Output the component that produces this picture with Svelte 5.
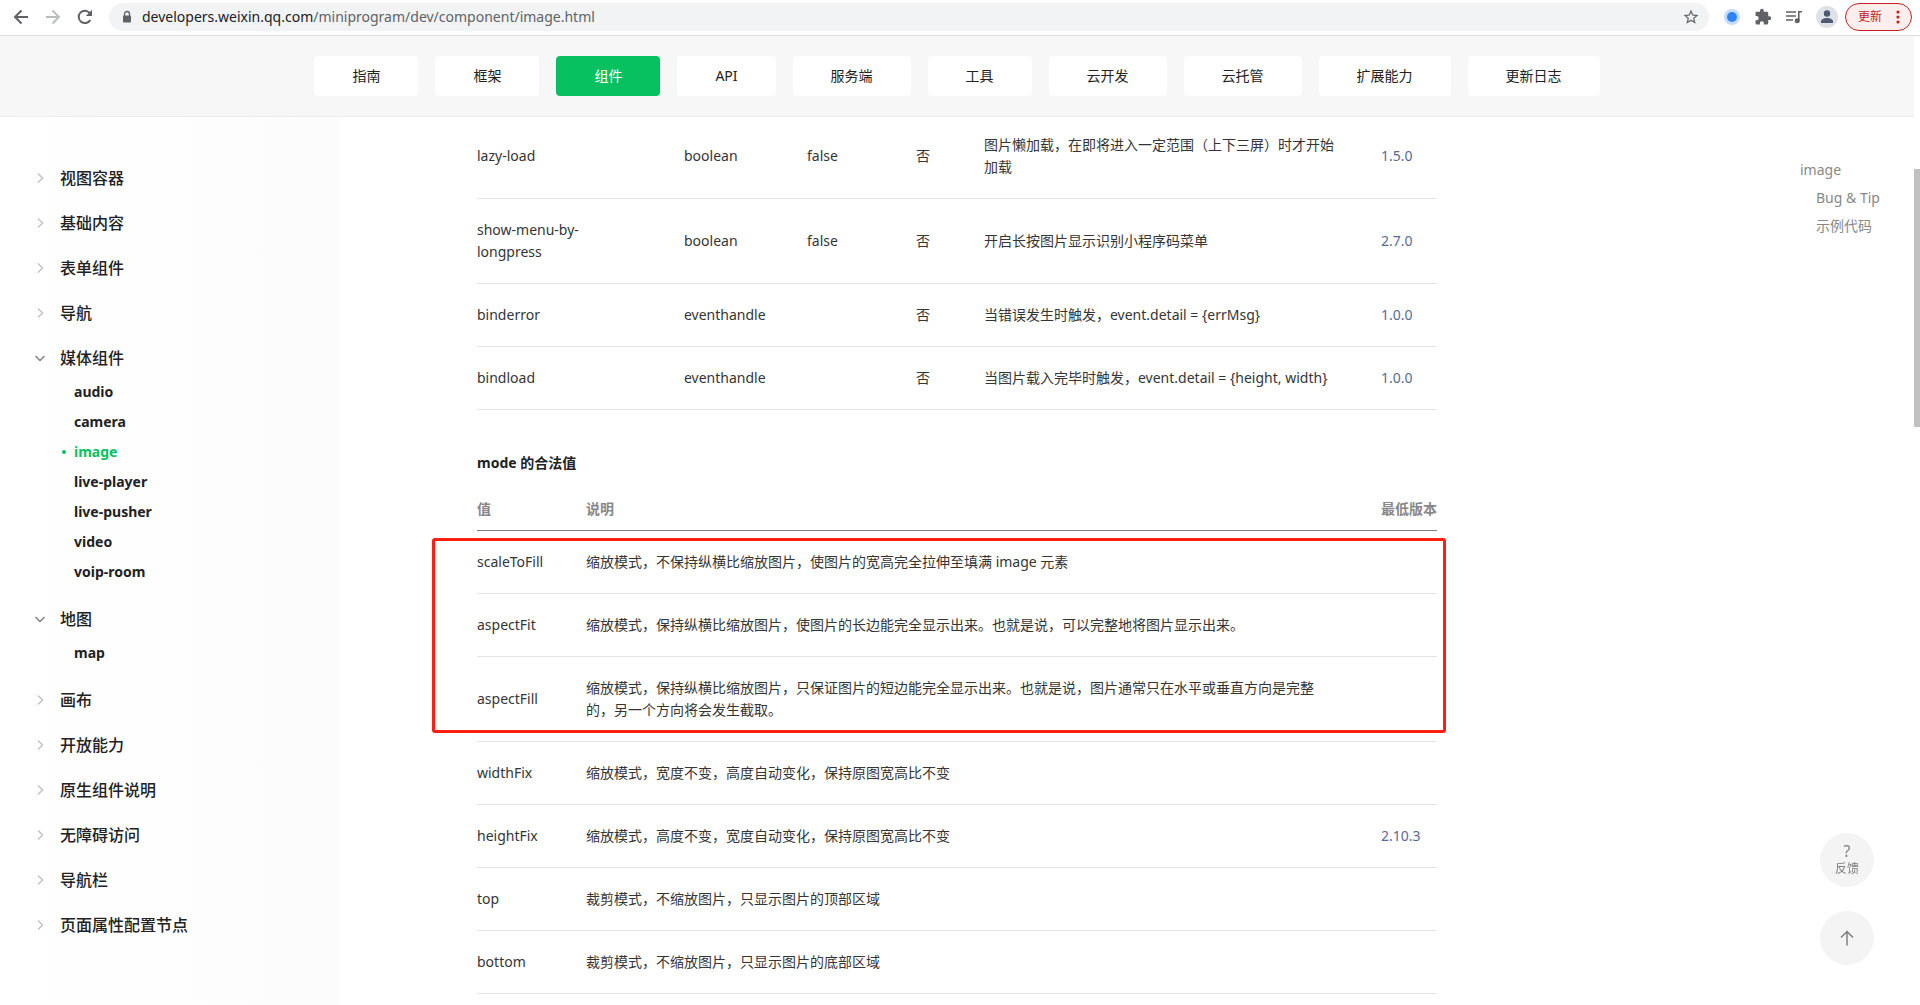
<script>
  const tabs = ['指南', '框架', '组件', 'API', '服务端', '工具', '云开发', '云托管', '扩展能力', '更新日志']
  let activeTab = '组件'

  let groups = [
    { title: '视图容器' },
    { title: '基础内容' },
    { title: '表单组件' },
    { title: '导航' },
    {
      title: '媒体组件',
      open: true,
      items: ['audio', 'camera', 'image', 'live-player', 'live-pusher', 'video', 'voip-room']
    },
    { title: '地图', open: true, items: ['map'] },
    { title: '画布' },
    { title: '开放能力' },
    { title: '原生组件说明' },
    { title: '无障碍访问' },
    { title: '导航栏' },
    { title: '页面属性配置节点' }
  ]
  let current = 'image'

  const props = [
    { name: 'lazy-load', type: 'boolean', def: 'false', desc: '图片懒加载，在即将进入一定范围（上下三屏）时才开始加载', version: '1.5.0' },
    { name: 'show-menu-by-longpress', type: 'boolean', def: 'false', desc: '开启长按图片显示识别小程序码菜单', version: '2.7.0' },
    { name: 'binderror', type: 'eventhandle', def: '', desc: '当错误发生时触发，event.detail = {errMsg}', version: '1.0.0' },
    { name: 'bindload', type: 'eventhandle', def: '', desc: '当图片载入完毕时触发，event.detail = {height, width}', version: '1.0.0' }
  ]

  const modes = [
    { name: 'scaleToFill', desc: '缩放模式，不保持纵横比缩放图片，使图片的宽高完全拉伸至填满 image 元素' },
    { name: 'aspectFit', desc: '缩放模式，保持纵横比缩放图片，使图片的长边能完全显示出来。也就是说，可以完整地将图片显示出来。' },
    { name: 'aspectFill', desc: '缩放模式，保持纵横比缩放图片，只保证图片的短边能完全显示出来。也就是说，图片通常只在水平或垂直方向是完整的，另一个方向将会发生截取。' },
    { name: 'widthFix', desc: '缩放模式，宽度不变，高度自动变化，保持原图宽高比不变' },
    { name: 'heightFix', desc: '缩放模式，高度不变，宽度自动变化，保持原图宽高比不变', version: '2.10.3' },
    { name: 'top', desc: '裁剪模式，不缩放图片，只显示图片的顶部区域' },
    { name: 'bottom', desc: '裁剪模式，不缩放图片，只显示图片的底部区域' }
  ]

  function toggle(group) {
    group.open = !group.open
    groups = groups
  }
</script>

<div class="window">
  <div class="toolbar">
    <button class="tool" aria-label="后退">
      <svg viewBox="0 0 16 16" width="16" height="16" fill="none" stroke="#5f6368" stroke-width="2">
        <path d="M15 8H2.5M8.5 1.5L2 8l6.500 6.500"/>
      </svg>
    </button>
    <button class="tool" aria-label="前进">
      <svg viewBox="0 0 16 16" width="16" height="16" fill="none" stroke="#babcbe" stroke-width="2">
        <path d="M1 8h12.500M7.500 1.500L14 8l-6.500 6.500"/>
      </svg>
    </button>
    <button class="tool" aria-label="重新加载">
      <svg viewBox="0 0 16 16" width="16" height="16">
        <path d="M13.300 11A6.200 6.200 0 1 1 12.600 3.800L14 5.200" fill="none" stroke="#5f6368" stroke-width="2"/>
        <path d="M15 .8v6.200H8.800z" fill="#5f6368"/>
      </svg>
    </button>
    <div class="address">
      <svg viewBox="0 0 10 14" width="10" height="14">
        <path d="M2.500 6V4a2.500 2.500 0 0 1 5 0v2" fill="none" stroke="#5f6368" stroke-width="1.300"/>
        <rect x="1" y="5.500" width="8" height="7" rx="1" fill="#5f6368"/>
      </svg>
      <span class="url">developers.weixin.qq.com<span class="path">/miniprogram/dev/component/image.html</span></span>
      <svg viewBox="0 0 24 24" width="18" height="18" fill="#5f6368">
        <path d="M22 9.240l-7.190-.62L12 2 9.190 8.630 2 9.240l5.460 4.730L5.820 21 12 17.270 18.180 21l-1.630-7.030L22 9.240zM12 15.400l-3.760 2.270 1-4.280-3.320-2.880 4.380-.38L12 6.100l1.710 4.040 4.380.38-3.320 2.880 1 4.280L12 15.400z"/>
      </svg>
    </div>
    <div class="extensions">
      <svg viewBox="0 0 18 18" width="18" height="18">
        <circle cx="9" cy="9" r="8" fill="#c3dbfc"/>
        <circle cx="9" cy="9" r="5" fill="#2c84f5"/>
      </svg>
      <svg viewBox="0 0 24 24" width="18" height="18" fill="#5f6368">
        <path d="M20.500 11H19V7c0-1.100-.9-2-2-2h-4V3.500a2.500 2.500 0 0 0-5 0V5H4c-1.100 0-2 .9-2 2v3.800h1.500a2.700 2.700 0 0 1 0 5.400H2V20c0 1.100.9 2 2 2h3.800v-1.500a2.700 2.700 0 0 1 5.400 0V22H17c1.100 0 2-.9 2-2v-4h1.500a2.500 2.500 0 0 0 0-5z"/>
      </svg>
      <svg viewBox="0 0 18 18" width="18" height="18">
        <path d="M1 4h10M1 8h10M1 12h7" stroke="#5f6368" stroke-width="1.600"/>
        <path d="M17 3.800h-3.200V13" fill="none" stroke="#5f6368" stroke-width="1.600"/>
        <circle cx="12.200" cy="12.800" r="2.500" fill="#5f6368"/>
      </svg>
      <svg viewBox="0 0 22 22" width="22" height="22">
        <circle cx="11" cy="11" r="11" fill="#dee1e6"/>
        <circle cx="11" cy="7.500" r="3.200" fill="#4f5b70"/>
        <path d="M5 17v-1.500c0-2 3-3.500 6-3.500s6 1.500 6 3.500V17z" fill="#4f5b70"/>
      </svg>
    </div>
    <button class="update">
      更新
      <svg viewBox="0 0 4 14" width="4" height="14" fill="#c5221f">
        <circle cx="2" cy="2" r="1.600"/>
        <circle cx="2" cy="7" r="1.600"/>
        <circle cx="2" cy="12" r="1.600"/>
      </svg>
    </button>
  </div>

  <div class="viewport">
    <div class="page">
      <nav class="tabs">
        {#each tabs as tab}
          <a href="#{tab}" class="tab" class:active={tab === activeTab} on:click|preventDefault={() => (activeTab = tab)}>{tab}</a>
        {/each}
      </nav>

      <div class="columns">
        <aside class="sidebar">
          {#each groups as group}
            <div class="group">
              <button class="group-title" aria-expanded={!!group.open} on:click={() => toggle(group)}>
                <svg class="arrow" class:open={group.open} viewBox="0 0 12 12" width="12" height="12" fill="none" stroke="currentColor" stroke-width="1.500">
                  <path d="M4 1.500L8.500 6 4 10.500"/>
                </svg>
                {group.title}
              </button>
              {#if group.open && group.items}
                <ul>
                  {#each group.items as item}
                    <li>
                      <a href="#{item}" class:current={item === current} on:click|preventDefault={() => (current = item)}>{item}</a>
                    </li>
                  {/each}
                </ul>
              {/if}
            </div>
          {/each}
        </aside>

        <main>
          <table>
            <colgroup>
              <col class="c-prop" />
              <col class="c-type" />
              <col class="c-default" />
              <col class="c-required" />
              <col />
              <col class="c-version" />
            </colgroup>
            <tbody>
              {#each props as row}
                <tr>
                  <td class="prop">{row.name}</td>
                  <td>{row.type}</td>
                  <td>{row.def}</td>
                  <td>否</td>
                  <td>{row.desc}</td>
                  <td><a href="#v{row.version}">{row.version}</a></td>
                </tr>
              {/each}
            </tbody>
          </table>

          <h4>mode 的合法值</h4>

          <div class="modes">
            <table>
              <colgroup>
                <col class="c-mode" />
                <col />
                <col class="c-version" />
              </colgroup>
              <thead>
                <tr>
                  <th>值</th>
                  <th>说明</th>
                  <th>最低版本</th>
                </tr>
              </thead>
              <tbody>
                {#each modes as mode}
                  <tr>
                    <td>{mode.name}</td>
                    <td>{mode.desc}</td>
                    <td>{#if mode.version}<a href="#v{mode.version}">{mode.version}</a>{/if}</td>
                  </tr>
                {/each}
              </tbody>
            </table>
            <div class="highlight"></div>
          </div>
        </main>

        <nav class="toc">
          <a href="#image">image</a>
          <a class="sub" href="#bug-tip">Bug &amp; Tip</a>
          <a class="sub" href="#demo">示例代码</a>
        </nav>
      </div>
    </div>

    <div class="scrollbar"><div class="thumb"></div></div>
  </div>

  <div class="floating">
    <button class="round">
      <span class="mark">?</span>
      反馈
    </button>
    <button class="round" aria-label="回到顶部">
      <svg viewBox="0 0 16 16" width="16" height="16" fill="none" stroke="#808080" stroke-width="1.500">
        <path d="M8 15.500V1.500M2 7.500l6-6 6 6"/>
      </svg>
    </button>
  </div>
</div>

<style>
  :global(body) {
    margin: 0;
    background: #fff;
    font-family: "Noto Sans", "Noto Sans CJK SC", sans-serif;
    font-size: 14px;
    line-height: 22px;
    color: #353535;
  }

  button {
    margin: 0;
    padding: 0;
    border: 0;
    background: none;
    font: inherit;
    color: inherit;
    cursor: pointer;
  }
  a { color: inherit; text-decoration: none; }
  svg { display: block; flex-shrink: 0; }

  .window {
    display: flex;
    flex-direction: column;
    height: 100vh;
    overflow: hidden;
  }

  .toolbar {
    display: flex;
    align-items: center;
    flex-shrink: 0;
    box-sizing: border-box;
    height: 36px;
    padding: 0 8px 1px 13px;
    border-bottom: 1px solid #dadce0;
    background: #fff;
  }
  .tool { margin-right: 16px; }
  .address {
    flex: 1;
    display: flex;
    align-items: center;
    gap: 10px;
    height: 28px;
    margin-right: 14px;
    padding: 0 9px 0 13px;
    border-radius: 14px;
    background: #f1f3f4;
    box-sizing: border-box;
  }
  .url { flex: 1; color: #202124; }
  .path { color: #5f6368; }
  .extensions {
    display: flex;
    align-items: center;
    gap: 13px;
    margin-right: 7px;
  }
  .update {
    display: flex;
    align-items: center;
    gap: 14px;
    box-sizing: border-box;
    height: 28px;
    padding: 0 11px 0 12px;
    border: 1px solid #c5221f;
    border-radius: 14px;
    background: #fceeed;
    color: #c5221f;
    font-size: 12px;
  }

  .viewport {
    flex: 1;
    display: flex;
    min-height: 0;
  }
  .page {
    flex: 1;
    display: flex;
    flex-direction: column;
    min-width: 0;
  }

  .tabs {
    display: flex;
    justify-content: center;
    gap: 17px;
    padding: 20px 0;
    border-bottom: 1px solid #ebebeb;
    background: #f7f7f7;
  }
  .tab {
    padding: 9px 38px;
    border-radius: 4px;
    background: #fff;
    color: #222;
  }
  .tab.active { background: #07c160; color: #fff; }

  .columns {
    flex: 1;
    display: grid;
    grid-template-columns: 340px 1fr 340px;
    min-height: 0;
    overflow: hidden;
  }

  .sidebar {
    padding: 40px 0 0 34px;
    background: linear-gradient(90deg, #fff, #fcfcfc);
    color: #222;
  }
  .group { padding: 9px 0 12px; }
  .group-title {
    display: flex;
    align-items: center;
    gap: 14px;
    font-size: 16px;
    font-weight: 500;
    line-height: 24px;
  }
  .arrow { color: #c4c4c4; }
  .arrow.open { color: #808080; transform: rotate(90deg); }
  .group ul {
    margin: 7px 0 0;
    padding: 0 0 0 26px;
    list-style: none;
  }
  .group ul:last-child { margin-bottom: -1px; }
  .group li { line-height: 30px; font-weight: 700; }
  .group li a {
    display: flex;
    align-items: center;
  }
  .group li a::before {
    content: '';
    width: 4px;
    height: 4px;
    margin: 0 8px 0 2px;
    border-radius: 50%;
  }
  .group li a.current { color: #07c160; }
  .group li a.current::before { background: #07c160; }

  main {
    width: 100%;
    max-width: 960px;
    margin: -3px auto 0;
  }
  table {
    width: 100%;
    table-layout: fixed;
    border-collapse: separate;
    border-spacing: 0;
  }
  .c-prop { width: 207px; }
  .c-type { width: 123px; }
  .c-default { width: 109px; }
  .c-required { width: 68px; }
  .c-version { width: 56px; }
  .c-mode { width: 109px; }
  td {
    padding: 20px 40px 20px 0;
    border-bottom: 1px solid #e4e4e4;
    vertical-align: middle;
  }
  td.prop { padding-right: 60px; }
  td:last-child { padding-right: 0; }
  td a { color: #576b95; }
  th {
    padding: 10px 0;
    border-bottom: 1px solid #808080;
    color: #888;
    font-weight: 600;
    text-align: left;
    white-space: nowrap;
  }
  h4 {
    margin: 42px 0 14px;
    color: #222;
    font-size: 14px;
    font-weight: 700;
  }
  .modes { position: relative; }
  .highlight {
    position: absolute;
    top: 50px;
    left: -45px;
    right: -9px;
    height: 189px;
    border: 3px solid #ff1e10;
    border-radius: 3px;
    pointer-events: none;
  }

  .toc {
    justify-self: end;
    width: 114px;
    padding-top: 39px;
    line-height: 28px;
    color: #888;
  }
  .toc a { display: block; }
  .toc .sub { padding-left: 16px; }

  .scrollbar { width: 6px; background: #fff; }
  .thumb {
    height: 258px;
    margin-top: 133px;
    background: #c1c1c1;
  }

  .floating {
    position: fixed;
    right: 46px;
    bottom: 40px;
    display: flex;
    flex-direction: column;
    gap: 24px;
  }
  .round {
    display: flex;
    flex-direction: column;
    align-items: center;
    justify-content: center;
    width: 54px;
    height: 54px;
    border-radius: 50%;
    background: #f4f4f4;
    color: #808080;
    font-size: 12px;
    line-height: 17px;
  }
  .mark { font-size: 16px; }
</style>
